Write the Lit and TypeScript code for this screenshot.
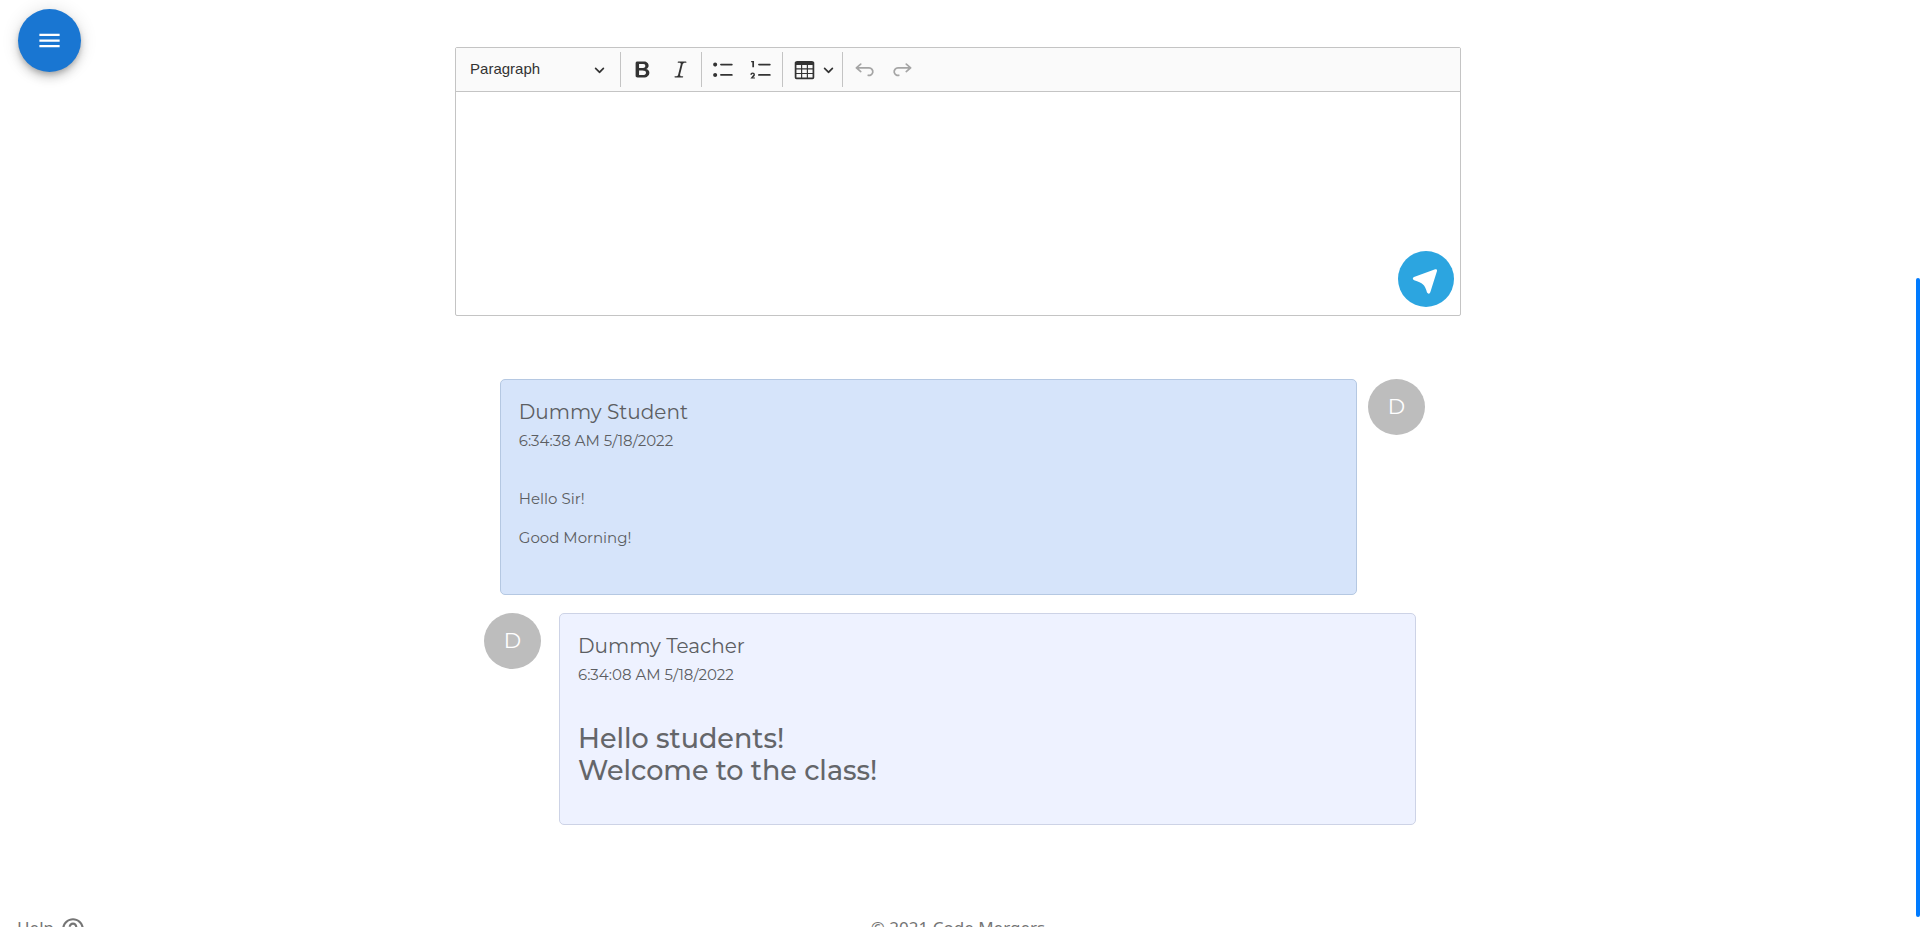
import { LitElement, html, svg, css } from "lit";
import { customElement } from "lit/decorators.js";

const icons = {
  bold: "M10.187 17H5.773c-.637 0-1.092-.138-1.364-.415-.273-.277-.409-.718-.409-1.323V4.738c0-.617.14-1.062.419-1.332.279-.27.73-.406 1.354-.406h4.68c.69 0 1.288.041 1.793.124.506.083.96.242 1.36.478.341.197.644.447.906.75a3.262 3.262 0 0 1 .808 2.162c0 1.401-.722 2.426-2.167 3.075C15.05 10.175 16 11.315 16 13.01a3.756 3.756 0 0 1-2.296 3.504 6.1 6.1 0 0 1-1.517.377c-.571.073-1.238.11-2 .11zm-.217-6.217H7v4.087h3.069c1.977 0 2.965-.69 2.965-2.072 0-.707-.256-1.22-.768-1.537-.512-.319-1.277-.478-2.296-.478zM7 5.13v3.619h2.606c.729 0 1.292-.067 1.69-.2a1.6 1.6 0 0 0 .91-.765c.165-.267.247-.566.247-.897 0-.707-.26-1.176-.778-1.409-.519-.232-1.31-.348-2.375-.348H7z",
  italic: "m9.586 14.633.021.004c-.036.335.095.655.393.962.082.083.173.15.274.201h1.474a.6.6 0 1 1 0 1.2H5.304a.6.6 0 0 1 0-1.2h1.15c.474-.07.809-.182 1.005-.334.157-.122.291-.32.404-.597l2.416-9.55a1.053 1.053 0 0 0-.281-.823 1.12 1.12 0 0 0-.442-.296H8.15a.6.6 0 0 1 0-1.2h6.443a.6.6 0 1 1 0 1.2h-1.195c-.376.056-.65.155-.823.296-.215.175-.423.439-.623.79l-2.366 9.347z",
  bulleted: "M7 5.75c0 .414.336.75.75.75h9.5a.75.75 0 1 0 0-1.5h-9.5a.75.75 0 0 0-.75.75zm-6 0C1 4.784 1.777 4 2.75 4c.966 0 1.75.777 1.75 1.75 0 .966-.777 1.75-1.75 1.75C1.784 7.5 1 6.723 1 5.75zm6 9c0 .414.336.75.75.75h9.5a.75.75 0 1 0 0-1.5h-9.5a.75.75 0 0 0-.75.75zm-6 0c0-.966.777-1.75 1.75-1.75.966 0 1.75.777 1.75 1.75 0 .966-.777 1.75-1.75 1.75-.966 0-1.75-.777-1.75-1.75z",
  numbered: "M7 5.75c0 .414.336.75.75.75h9.5a.75.75 0 1 0 0-1.5h-9.5a.75.75 0 0 0-.75.75zM3.5 3v5H2V3.7H1v-1h2.5V3zM.343 17.857l2.59-3.257H2.92a.6.6 0 1 0-1.04 0H.302a2 2 0 1 1 3.995 0h-.001c-.048.405-.16.734-.333.988-.175.254-.59.692-1.244 1.312H4.3v1h-4l.043-.043zM7 14.75a.75.75 0 0 1 .75-.75h9.5a.75.75 0 1 1 0 1.5h-9.5a.75.75 0 0 1-.75-.75z",
  table: "M3 6v3h4V6H3zm0 4v3h4v-3H3zm0 4v3h4v-3H3zm5 3h4v-3H8v3zm5 0h4v-3h-4v3zm4-4v-3h-4v3h4zm0-4V6h-4v3h4zm1.5 8a1.5 1.5 0 0 1-1.5 1.5H3A1.5 1.5 0 0 1 1.5 17V4c.222-.863 1.068-1.5 2-1.5h13c.932 0 1.778.637 2 1.5v13zM12 13v-3H8v3h4zm0-4V6H8v3h4z",
  undo: "m5.042 9.367 2.189 1.837a.75.75 0 0 1-.965 1.149l-3.788-3.18a.747.747 0 0 1-.21-.284.75.75 0 0 1 .17-.945L6.23 4.762a.75.75 0 1 1 .964 1.15L4.863 7.866h8.917A.75.75 0 0 1 14 7.9a4 4 0 1 1-1.477 7.718l.344-1.489a2.5 2.5 0 1 0 1.094-4.73l.008-.032H5.042z",
  redo: "m14.958 9.367-2.189 1.837a.75.75 0 0 0 .965 1.149l3.788-3.18a.747.747 0 0 0 .21-.284.75.75 0 0 0-.17-.945L13.77 4.762a.75.75 0 1 0-.964 1.15l2.331 1.955H6.22A.75.75 0 0 0 6 7.9a4 4 0 1 0 1.477 7.718l-.344-1.489A2.5 2.5 0 1 1 6.039 9.4l-.008-.032h8.927z",
};

type IconName = keyof typeof icons;

const chevron = html`<svg class="chevron" viewBox="0 0 10 10" aria-hidden="true">
  ${svg`<path d="M.941 4.523a.75.75 0 1 1 1.06-1.06l3.006 3.005 3.005-3.005a.75.75 0 1 1 1.06 1.06l-3.549 3.55a.75.75 0 0 1-1.168-.136L.941 4.523z" />`}
</svg>`;

@customElement("message-editor")
export class MessageEditor extends LitElement {
  static styles = css`
    :host {
      display: block;
      position: relative;
      border: 1px solid #c4c4c4;
      border-radius: 2px;
      background: #fff;
    }
    .toolbar {
      display: flex;
      gap: 4px;
      padding: 4px;
      background: #fafafa;
      border-bottom: 1px solid #c4c4c4;
    }
    .heading {
      display: grid;
      align-items: center;
      width: 156px;
    }
    .heading select,
    .heading .chevron {
      grid-area: 1 / 1;
    }
    .heading select {
      appearance: none;
      width: 100%;
      height: 35px;
      padding: 0 28px 2px 10px;
      border: 0;
      background: none;
      color: #333;
      font: 15px/20px "Liberation Sans", Arial, sans-serif;
    }
    .heading .chevron {
      justify-self: end;
      margin-right: 11px;
      pointer-events: none;
    }
    .sep {
      width: 1px;
      background: #c4c4c4;
    }
    button {
      display: grid;
      place-items: center;
      width: 34px;
      height: 35px;
      padding: 0;
      border: 0;
      border-radius: 2px;
      background: none;
      color: #333;
      cursor: pointer;
    }
    button:disabled {
      color: #a5a5a5;
      cursor: default;
    }
    .icon {
      width: 23px;
      height: 23px;
      fill: currentColor;
    }
    .chevron {
      width: 11px;
      height: 11px;
      fill: #333;
    }
    .split {
      display: flex;
    }
    .split .arrow {
      width: 17px;
      padding-right: 2px;
    }
    textarea {
      display: block;
      box-sizing: border-box;
      width: 100%;
      height: 223px;
      padding: 16px;
      border: 0;
      outline: 0;
      resize: none;
      background: none;
      font: 15px/24px "Liberation Sans", Arial, sans-serif;
    }
    .send {
      position: absolute;
      right: 6px;
      bottom: 8px;
      width: 56px;
      height: 56px;
      border-radius: 50%;
      background: #2ca5e0;
    }
    .send svg {
      width: 56px;
      height: 56px;
      fill: #fff;
    }
  `;

  private tool(name: IconName, label: string, disabled = false) {
    return html`<button type="button" aria-label=${label} ?disabled=${disabled}>
      <svg class="icon" viewBox="0 0 20 20" aria-hidden="true">${svg`<path d=${icons[name]} />`}</svg>
    </button>`;
  }

  render() {
    return html`
      <div class="toolbar" role="toolbar" aria-label="Editor toolbar">
        <label class="heading">
          <select aria-label="Heading">
            <option>Paragraph</option>
          </select>
          ${chevron}
        </label>
        <span class="sep"></span>
        ${this.tool("bold", "Bold")} ${this.tool("italic", "Italic")}
        <span class="sep"></span>
        ${this.tool("bulleted", "Bulleted List")} ${this.tool("numbered", "Numbered List")}
        <span class="sep"></span>
        <div class="split">
          ${this.tool("table", "Insert table")}
          <button type="button" class="arrow" aria-label="Table options">${chevron}</button>
        </div>
        <span class="sep"></span>
        ${this.tool("undo", "Undo", true)} ${this.tool("redo", "Redo", true)}
      </div>
      <textarea aria-label="Message"></textarea>
      <button type="button" class="send" aria-label="Send">
        <svg viewBox="0 0 56 56" aria-hidden="true">
          <path d="M37.2 18.3Q39.5 17.6 39 20L32.3 41.2Q30.8 44 29 41.6Q27.6 35.6 25 33.4Q22.4 30.9 16.2 29.2Q13.5 27.6 16 26Z" />
        </svg>
      </button>
    `;
  }
}

interface Message {
  author: string;
  time: string;
  own: boolean;
  large: boolean;
  lines: string[];
}

@customElement("app-root")
export class AppRoot extends LitElement {
  static styles = css`
    :host {
      display: block;
      position: relative;
      box-sizing: border-box;
      height: 100vh;
      padding-right: 4px;
      overflow: hidden;
      background: #fff;
      color: #5c5e62;
      font-family: Montserrat, Inter, sans-serif;
    }
    .menu {
      position: absolute;
      top: 9px;
      left: 18px;
      display: grid;
      place-items: center;
      width: 63px;
      height: 63px;
      padding: 0;
      border: 0;
      border-radius: 50%;
      background: #1976d2;
      box-shadow: 0 3px 5px -1px rgba(0, 0, 0, 0.2), 0 6px 10px 0 rgba(0, 0, 0, 0.14),
        0 1px 18px 0 rgba(0, 0, 0, 0.12);
      cursor: pointer;
    }
    .menu svg {
      width: 27px;
      height: 27px;
      fill: #fff;
    }
    .thumb {
      position: absolute;
      right: 0;
      top: 30%;
      bottom: 10px;
      width: 4px;
      border-radius: 2px;
      background: #007bff;
    }
    main {
      width: 52.5%;
      margin: 0 auto;
      padding-top: 47px;
    }
    .chat {
      display: flex;
      flex-direction: column;
      gap: 18px;
      margin-top: 63px;
      padding: 0 36px 0 29px;
    }
    .row {
      display: flex;
      align-items: flex-start;
      gap: 18px;
    }
    .row.own {
      flex-direction: row-reverse;
      gap: 11px;
    }
    .avatar {
      flex: none;
      width: 57px;
      height: 56px;
      border-radius: 50%;
      background: #bdbdbd;
      color: #fff;
      font-size: 21px;
      line-height: 56px;
      text-align: center;
    }
    .card {
      box-sizing: border-box;
      width: 91.1%;
      padding: 20px 18px 28px;
      border: 1px solid #cdd3e6;
      border-radius: 5px;
      background: #eef2ff;
    }
    .own .card {
      border-color: #b5c8e2;
      background: #d6e4fa;
    }
    .author {
      margin: 0;
      font-size: 20px;
      font-weight: 400;
      line-height: 24px;
    }
    .time {
      display: block;
      margin-top: 6px;
      font-size: 15px;
      line-height: 22px;
    }
    .body {
      margin-top: 36px;
      font-size: 15px;
      line-height: 22px;
    }
    .body p {
      margin: 0 0 17px;
    }
    .body.large {
      margin-top: 37px;
      padding-bottom: 9px;
      color: #64666a;
      font-size: 27px;
      font-weight: 500;
      line-height: 32px;
    }
    .body.large p {
      margin: 0;
    }
    footer {
      display: grid;
      grid-template-columns: 1fr auto 1fr;
      align-items: start;
      margin-top: 91px;
      padding: 0 17px;
      color: #757575;
      font: 17px/24px "Noto Sans", sans-serif;
    }
    .help {
      display: flex;
      gap: 6px;
      color: inherit;
      text-decoration: none;
    }
    .help svg {
      width: 26px;
      height: 26px;
      fill: currentColor;
    }
  `;

  private messages: Message[] = [
    {
      author: "Dummy Student",
      time: "6:34:38 AM 5/18/2022",
      own: true,
      large: false,
      lines: ["Hello Sir!", "Good Morning!"],
    },
    {
      author: "Dummy Teacher",
      time: "6:34:08 AM 5/18/2022",
      own: false,
      large: true,
      lines: ["Hello students!", "Welcome to the class!"],
    },
  ];

  render() {
    return html`
      <main>
        <message-editor></message-editor>
        <section class="chat" aria-label="Messages">
          ${this.messages.map(
            (m) => html`
              <div class="row ${m.own ? "own" : ""}">
                <div class="avatar" aria-hidden="true">${m.author[0]}</div>
                <article class="card">
                  <h2 class="author">${m.author}</h2>
                  <time class="time">${m.time}</time>
                  <div class="body ${m.large ? "large" : ""}">
                    ${m.lines.map((line) => html`<p>${line}</p>`)}
                  </div>
                </article>
              </div>
            `,
          )}
        </section>
      </main>
      <footer>
        <a class="help" href="#help">
          Help
          <svg viewBox="0 0 24 24" aria-hidden="true">
            <path d="M11 18h2v-2h-2v2zm1-16C6.480 2 2 6.480 2 12s4.480 10 10 10 10-4.480 10-10S17.520 2 12 2zm0 18c-4.410 0-8-3.590-8-8s3.590-8 8-8 8 3.590 8 8-3.590 8-8 8zm0-14c-2.210 0-4 1.790-4 4h2c0-1.100.9-2 2-2s2 .9 2 2c0 2-3 1.750-3 5h2c0-2.250 3-2.500 3-5 0-2.210-1.790-4-4-4z" />
          </svg>
        </a>
        <span>© 2021 Code Mergers</span>
      </footer>
      <button class="menu" type="button" aria-label="Menu">
        <svg viewBox="0 0 24 24" aria-hidden="true">
          <path d="M3 18h18v-2H3v2zm0-5h18v-2H3v2zm0-7v2h18V6H3z" />
        </svg>
      </button>
      <div class="thumb"></div>
    `;
  }
}
